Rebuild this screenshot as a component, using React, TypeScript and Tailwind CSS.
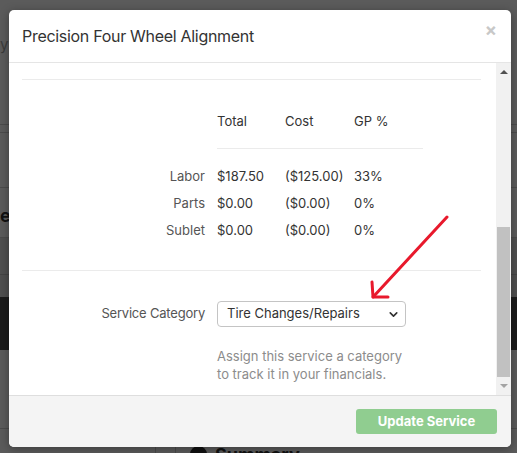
import React from 'react';
import { ChevronDown } from 'lucide-react';

const rows = [
  { label: 'Labor', total: '$187.50', cost: '($125.00)', gp: '33%' },
  { label: 'Parts', total: '$0.00', cost: '($0.00)', gp: '0%' },
  { label: 'Sublet', total: '$0.00', cost: '($0.00)', gp: '0%' },
];

const Backdrop: React.FC = () => (
  <div className="w-[517px] h-[453px] bg-[#5b5b5b] flex flex-col">
    <div className="h-[124px] pt-[34px] text-[15px] text-[#3a3a3a]">y</div>
    <div className="h-px bg-[#4b4b4b]" />
    <div className="h-[7px]" />
    <div className="h-px bg-[#4b4b4b]" />
    <div className="h-[54px]" />
    <div className="h-px bg-[#4b4b4b]" />
    <div className="h-[49px] flex items-center pt-[6px] text-[18px] font-bold text-[#111]">er</div>
    <div className="h-px bg-[#4b4b4b]" />
    <div className="h-[36px] bg-[#505050]" />
    <div className="h-px bg-[#444]" />
    <div className="h-[22px] bg-[#4f4f4f]" />
    <div className="h-[53px] bg-[#1b1b1b]" />
    <div className="h-[78px]" />
    <div className="h-px bg-[#4b4b4b]" />
    <div className="flex-1 flex overflow-hidden">
      <div className="w-[155px]" />
      <div className="w-px bg-[#4b4b4b]" />
      <div className="w-[19px]" />
      <div className="w-px bg-[#4b4b4b]" />
      <div className="flex items-start gap-2 pl-[14px] pt-[17px]">
        <div className="w-[17px] h-[17px] rounded-full bg-[#111]" />
        <span className="text-[18px] font-bold text-[#111] leading-none">Summary</span>
      </div>
    </div>
  </div>
);

const Scrollbar: React.FC = () => (
  <div className="w-[15px] bg-[#f1f1f1] flex flex-col items-center">
    <div className="h-[17px] flex items-center justify-center">
      <div className="w-0 h-0 border-x-[4px] border-x-transparent border-b-[4px] border-b-[#505050]" />
    </div>
    <div className="h-[147px]" />
    <div className="w-[13px] h-[150px] bg-[#c1c1c1]" />
    <div className="flex-1 flex items-center justify-center">
      <div className="w-0 h-0 border-x-[4px] border-x-transparent border-t-[4px] border-t-[#a3a3a3]" />
    </div>
  </div>
);

const Arrow: React.FC = () => (
  <svg className="absolute left-[360px] top-[205px]" width="100" height="100" viewBox="0 0 100 100">
    <g stroke="#e8192c" strokeWidth="3" strokeLinecap="round" fill="none">
      <line x1="87" y1="12" x2="14" y2="91" />
      <line x1="13" y1="92" x2="12" y2="77" />
      <line x1="13" y1="92" x2="28" y2="92" />
    </g>
  </svg>
);

export default function App() {
  return (
    <div className="relative w-[517px] h-[453px] overflow-hidden font-['Inter','Noto_Sans',sans-serif]">
      <Backdrop />
      <div className="absolute left-[9px] top-[10px] w-[502px] h-[437px] bg-white rounded-[5px] flex flex-col overflow-hidden shadow-[0_2px_10px_rgba(0,0,0,0.35)]">
        <div className="h-[53px] shrink-0 border-b border-[#e5e5e5] flex items-center justify-between pl-[13px] pr-[14px]">
          <h2 className="text-[16px] text-[#333] tracking-[-0.3px]">Precision Four Wheel Alignment</h2>
          <span className="text-[18px] font-bold text-[#c8c8c8] leading-none -mt-[12px]">×</span>
        </div>
        <div className="flex-1 flex min-h-0">
          <div className="flex-1 pl-[13px] pr-[15px] pt-[16px] text-[13px] text-[#333]">
            <div className="border-t border-[#ebebeb]" />
            <div className="grid grid-cols-[195px_68px_69px_69px]">
              <div className="h-[69px]" />
              <div className="h-[69px] flex items-end pb-[17px] border-b border-[#ebebeb]">Total</div>
              <div className="h-[69px] flex items-end pb-[17px] border-b border-[#ebebeb]">Cost</div>
              <div className="h-[69px] flex items-end pb-[17px] border-b border-[#ebebeb]">GP %</div>
              <div className="col-span-4 h-[14px]" />
              {rows.map((r) => (
                <React.Fragment key={r.label}>
                  <div className="h-[27px] flex items-center justify-end pr-[12px] text-[#555]">{r.label}</div>
                  <div className="h-[27px] flex items-center">{r.total}</div>
                  <div className="h-[27px] flex items-center">{r.cost}</div>
                  <div className="h-[27px] flex items-center">{r.gp}</div>
                </React.Fragment>
              ))}
            </div>
            <div className="mt-[26px] border-t border-[#ebebeb]" />
            <div className="mt-[30px] flex items-center">
              <label className="w-[195px] text-right pr-[12px] text-[#555] tracking-[-0.2px]">Service Category</label>
              <div className="w-[189px] h-[26px] border border-[#c4c4c4] rounded-[4px] flex items-center justify-between pl-[9px] pr-[5px] text-[#333]">
                <span>Tire Changes/Repairs</span>
                <ChevronDown className="w-[13px] h-[13px] text-[#333]" strokeWidth={3} />
              </div>
            </div>
            <p className="mt-[20px] ml-[195px] w-[190px] leading-[18px] text-[#8c8c8c]">
              Assign this service a category to track it in your financials.
            </p>
          </div>
          <Scrollbar />
        </div>
        <div className="h-[52px] shrink-0 border-t border-[#dedede] bg-[#f4f4f4] flex items-center justify-end pr-[14px]">
          <button className="w-[141px] h-[25px] rounded-[3px] bg-[#90cd90] text-white text-[13px] font-bold">
            Update Service
          </button>
        </div>
      </div>
      <Arrow />
    </div>
  );
}
